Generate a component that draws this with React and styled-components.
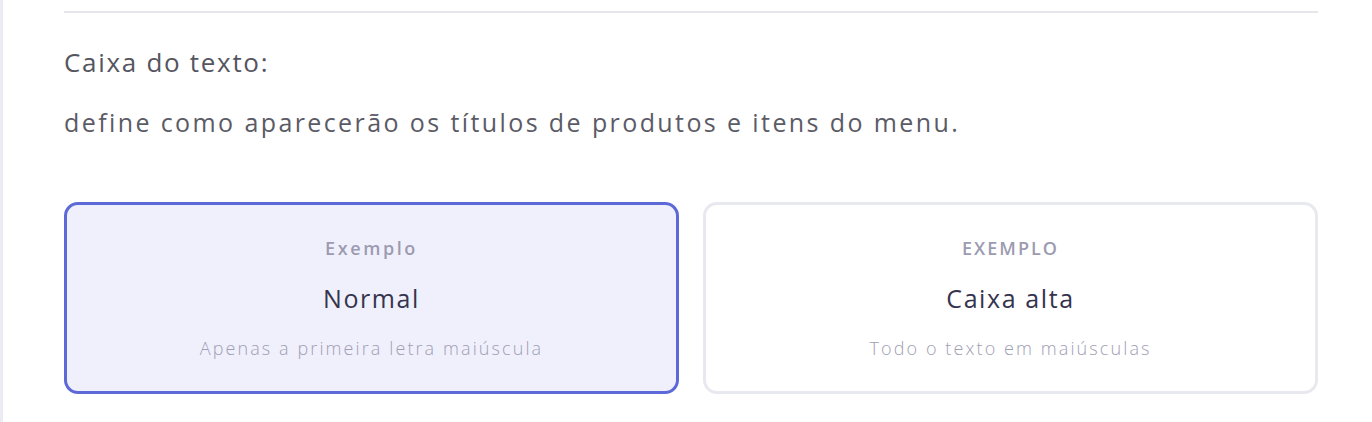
import React from "react";
import styled, { createGlobalStyle } from "styled-components";

const Global = createGlobalStyle`
  html, body { margin: 0; padding: 0; background: #ffffff; }
  body { font-family: "Open Sans", "Liberation Sans", sans-serif; -webkit-font-smoothing: antialiased; }
`;

const Page = styled.div`
  min-height: 422px;
  box-sizing: border-box;
  border-left: 3px solid #ecebf4;
  padding: 11px 54px 0 61px;
`;

const Divider = styled.div`
  height: 2px;
  background: #e6e6ea;
`;

const Title = styled.h3`
  margin: 31px 0 0;
  font-size: 26px;
  line-height: 36px;
  font-weight: 400;
  letter-spacing: 1.7px;
  color: #55555f;
  white-space: nowrap;
`;

const Description = styled.p`
  margin: 24px 0 0;
  font-size: 25px;
  line-height: 36px;
  font-weight: 400;
  letter-spacing: 2.4px;
  color: #5b5b66;
  white-space: nowrap;
`;

const Options = styled.div`
  margin-top: 62px;
  display: grid;
  grid-template-columns: 1fr 1fr;
  gap: 24px;
`;

const Card = styled.button`
  height: 192px;
  box-sizing: border-box;
  border-radius: 14px;
  border: 3px solid ${(p) => (p.$active ? "#5c69d6" : "#e8e8ef")};
  background: ${(p) => (p.$active ? "#f0f0fc" : "#ffffff")};
  display: flex;
  flex-direction: column;
  align-items: center;
  justify-content: center;
  padding: 0;
  font-family: inherit;
  cursor: pointer;
`;

const Label = styled.span`
  font-size: 18px;
  line-height: 50px;
  font-weight: 600;
  letter-spacing: ${(p) => (p.$upper ? "2px" : "2.6px")};
  color: #9c9bb1;
  text-transform: ${(p) => (p.$upper ? "uppercase" : "none")};
`;

const Name = styled.span`
  font-size: 25px;
  line-height: 50px;
  font-weight: 400;
  letter-spacing: 1.6px;
  color: #35344e;
`;

const Hint = styled.span`
  font-size: 18px;
  line-height: 50px;
  font-weight: 300;
  letter-spacing: 2.1px;
  color: #9f9eb5;
`;

const options = [
  { key: "normal", name: "Normal", hint: "Apenas a primeira letra maiúscula", upper: false, active: true },
  { key: "upper", name: "Caixa alta", hint: "Todo o texto em maiúsculas", upper: true, active: false },
];

export default function App() {
  return (
    <>
      <Global />
      <Page>
        <Divider />
        <Title>Caixa do texto:</Title>
        <Description>define como aparecerão os títulos de produtos e itens do menu.</Description>
        <Options>
          {options.map((o) => (
            <Card key={o.key} $active={o.active} type="button">
              <Label $upper={o.upper}>Exemplo</Label>
              <Name>{o.name}</Name>
              <Hint>{o.hint}</Hint>
            </Card>
          ))}
        </Options>
      </Page>
    </>
  );
}
